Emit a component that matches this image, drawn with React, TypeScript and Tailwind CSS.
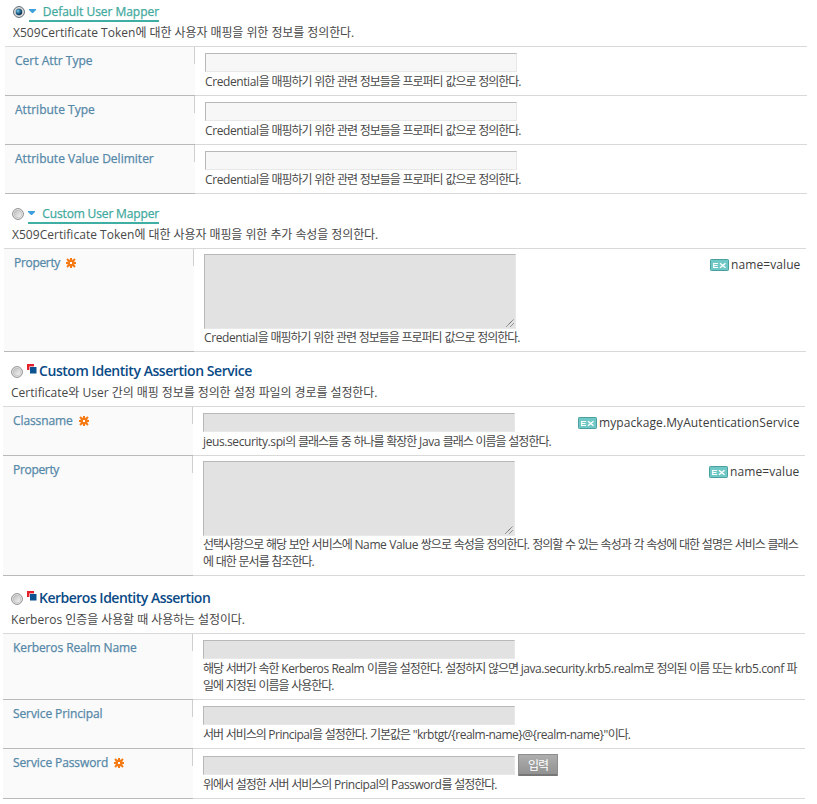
import type { ReactNode } from "react";

const LATIN = "font-['Open_Sans','Noto_Sans_CJK_KR',sans-serif]";
const HANGUL = "font-['Noto_Sans_CJK_KR',sans-serif]";

/** Sets Korean and Latin runs with their own letter spacing. */
function Mixed({ text, korean, latin }: { text: string; korean: string; latin: string }) {
  const runs = text.match(/[\uac00-\ud7a3]+|[^\uac00-\ud7a3]+/g) ?? [];
  return (
    <>
      {runs.map((run, i) =>
        /[\uac00-\ud7a3]/.test(run) ? (
          <span key={i} className={`${HANGUL} ${korean}`}>{run}</span>
        ) : (
          <span key={i} className={latin}>{run}</span>
        ),
      )}
    </>
  );
}

function Radio({ checked = false }: { checked?: boolean }) {
  return (
    <svg width="12" height="12" viewBox="0 0 12 12" className="shrink-0">
      <defs>
        <linearGradient id="radioFace" x1="0" y1="0" x2="1" y2="1">
          <stop offset="0" stopColor="#bcbcbc" />
          <stop offset="1" stopColor="#f8f8f8" />
        </linearGradient>
        <radialGradient id="radioDot" cx="0.35" cy="0.35" r="0.7">
          <stop offset="0" stopColor="#7fd0ee" />
          <stop offset="0.5" stopColor="#246a94" />
          <stop offset="1" stopColor="#0b2a48" />
        </radialGradient>
      </defs>
      <circle cx="6" cy="6" r="5.4" fill="#f4f4f4" stroke={checked ? "#52616e" : "#8b8b8b"} strokeWidth="1" />
      <circle cx="6" cy="6" r="3.9" fill="url(#radioFace)" stroke="#b4b4b4" strokeWidth="0.6" />
      {checked && <circle cx="6" cy="6" r="3.2" fill="url(#radioDot)" />}
    </svg>
  );
}

function Required() {
  return (
    <svg width="10" height="10" viewBox="0 0 10 10" className="shrink-0">
      <path
        d="M5 0v10M0 5h10M1 1l8 8M9 1L1 9"
        stroke="#f47b16"
        strokeWidth="2"
      />
      <circle cx="5" cy="5" r="3.6" fill="#f47b16" />
      <rect x="4" y="4" width="2" height="2" fill="#fff" />
    </svg>
  );
}

function Example({ text, width }: { text: string; width: string }) {
  return (
    <div className="ml-auto mr-[5px] mt-[7px] flex h-[18px] items-center gap-[2px]">
      <svg width="19" height="12" viewBox="0 0 19 12">
        <rect x="0.5" y="0.5" width="18" height="11" rx="0.8" fill="#6fc8c6" stroke="#4aa09f" />
        <path d="M3 4.5h5M3 6.5h4.5M3 8.5h5M3.7 4v5" stroke="#fff" strokeWidth="1" fill="none" />
        <path d="M10 4.2l5.5 4.6M15.5 4.2L10 8.8" stroke="#fff" strokeWidth="1.4" fill="none" />
      </svg>
      <span className={`${width} whitespace-nowrap text-[12px] leading-[18px] tracking-[0.09px] text-[#3c3c3c]`}>{text}</span>
    </div>
  );
}

function MapperTitle({ text, checked, width, tracking }: { text: string; checked?: boolean; width: string; tracking: string }) {
  return (
    <div className="flex h-[18px] items-start">
      <div className="mt-[2px]"><Radio checked={checked} /></div>
      <div className={`ml-[4px] flex h-[18px] border-b-2 border-[#3fafa3] ${width}`}>
        <svg width="7" height="4" viewBox="0 0 7 4" className="mt-[5px]">
          <path d="M0 0h7v1L4 4H3L0 1z" fill="#3e9fdc" />
        </svg>
        <span className={`ml-auto whitespace-nowrap text-[12px] leading-[15px] text-[#3fa99e] [-webkit-text-stroke:0.25px] ${tracking}`}>{text}</span>
      </div>
    </div>
  );
}

function ServiceTitle({ text, tracking }: { text: string; tracking: string }) {
  return (
    <div className="flex h-[18px] items-start">
      <div className="mt-[4px]"><Radio /></div>
      <svg width="10" height="10" viewBox="0 0 10 10" className="ml-[4px] mt-[2px]">
        <rect width="7" height="6" fill="#e3202c" />
        <rect x="2.4" y="2.4" width="7" height="7" fill="#fff" />
        <rect x="3" y="3" width="6.5" height="6.5" fill="#0d5291" />
      </svg>
      <span className={`ml-[2px] whitespace-nowrap text-[14px] font-semibold leading-[17px] text-[#0a4a86] ${tracking}`}>{text}</span>
    </div>
  );
}

function Row({ label, required, height, children, example, tracking = "tracking-[-0.1px]" }: {
  label: string; required?: boolean; height: string; children: ReactNode; example?: ReactNode; tracking?: string;
}) {
  return (
    <div className={`flex ${height}`}>
      <div className="flex w-[190px] shrink-0 border-b border-[#b9b9b9] bg-[#fafafa]">
        <div className="mt-[5px] flex h-[18px] grow items-center gap-[6px] pl-[10px]">
          <span className={`whitespace-nowrap text-[12px] text-[#5588a8] [-webkit-text-stroke:0.25px] ${tracking}`}>{label}</span>
          {required && <Required />}
        </div>
        <div className="h-[17px] w-px bg-[#cfcfcf]" />
      </div>
      <div className="flex grow border-b border-[#d9d9d9]">
        <div className="pl-[10px]">{children}</div>
        {example}
      </div>
    </div>
  );
}

function Input({ enabled = false, margin = "mt-[6px]" }: { enabled?: boolean; margin?: string }) {
  return (
    <div className={`${margin} h-[19px] w-[312px] border border-b-[#e8e8e8] border-l-[#b8b8b8] border-r-[#e8e8e8] border-t-[#b8b8b8] ${enabled ? "bg-[#f7f7f7]" : "bg-[#e2e2e2]"}`} />
  );
}

function Area() {
  return (
    <div className="mt-[5px] flex h-[75px] w-[312px] items-end justify-end border border-b-[#e8e8e8] border-l-[#b8b8b8] border-r-[#e8e8e8] border-t-[#b8b8b8] bg-[#e2e2e2]">
      <svg width="9" height="9" viewBox="0 0 9 9">
        <path d="M0.5 7.5l7-7M4.5 7.5l3-3" stroke="#555" strokeWidth="1" strokeDasharray="1.2 0.5" />
      </svg>
    </div>
  );
}

function Desc({ lines, korean = "tracking-[-1.02px]", latin = "tracking-[-0.4px]", className = "" }: {
  lines: string[]; korean?: string; latin?: string; className?: string;
}) {
  return (
    <div className={`w-0 text-[12px] leading-[17px] text-[#484848] ${className}`}>
      {lines.map((l) => (
        <div key={l} className="h-[17px] whitespace-nowrap">
          <Mixed text={l} korean={korean} latin={latin} />
        </div>
      ))}
    </div>
  );
}

/** One-line summary under a section title, set looser than the field notes. */
function Summary({ text, className }: { text: string; className: string }) {
  return <Desc lines={[text]} korean="tracking-[-0.12px]" latin="tracking-[0.03px]" className={className} />;
}

const CREDENTIAL = "Credential을 매핑하기 위한 관련 정보들을 프로퍼티 값으로 정의한다.";

export default function App() {
  return (
    <div className={`${LATIN} h-[804px] w-[817px] overflow-hidden bg-white`}>
      <section className="ml-[5px] w-[802px]">
        <header className="h-[46px] pl-[8px] pt-[4px]">
          <MapperTitle text="Default User Mapper" checked width="w-[130px]" tracking="tracking-[-0.04px]" />
          <Summary className="mt-px" text="X509Certificate Token에 대한 사용자 매핑을 위한 정보를 정의한다." />
        </header>
        <div className="border-t border-[#d9d9d9]">
          {["Cert Attr Type", "Attribute Type", "Attribute Value Delimiter"].map((label) => (
            <Row key={label} label={label} height="h-[49px]" tracking="tracking-[0.01px]">
              <Input enabled />
              <Desc lines={[CREDENTIAL]} />
            </Row>
          ))}
        </div>
      </section>

      <section className="ml-[4px] w-[802px]">
        <header className="h-[54px] pl-[8px] pt-[12px]">
          <MapperTitle text="Custom User Mapper" width="w-[131px]" tracking="tracking-[-0.15px]" />
          <Summary className="mt-px" text="X509Certificate Token에 대한 사용자 매핑을 위한 추가 속성을 정의한다." />
        </header>
        <div className="border-t border-[#d9d9d9]">
          <Row label="Property" required height="h-[103px]" tracking="tracking-[-0.32px]" example={<Example text="name=value" width="w-[70px]" />}>
            <Area />
            <Desc className="-mt-px" lines={[CREDENTIAL]} />
          </Row>
        </div>
      </section>

      <section className="ml-[3px] w-[802px]">
        <header className="h-[54px] pl-[8px] pt-[10px]">
          <ServiceTitle text="Custom Identity Assertion Service" tracking="tracking-[-0.44px]" />
          <Summary className="mt-[3px]" text="Certificate와 User 간의 매핑 정보를 정의한 설정 파일의 경로를 설정한다." />
        </header>
        <div className="border-t border-[#d9d9d9]">
          <Row label="Classname" required height="h-[49px]" example={<Example text="mypackage.MyAutenticationService" width="w-[201px]" />}>
            <Input />
            <Desc lines={["jeus.security.spi의 클래스들 중 하나를 확장한 Java 클래스 이름을 설정한다."]} />
          </Row>
          <Row label="Property" height="h-[120px]" tracking="tracking-[-0.32px]" example={<Example text="name=value" width="w-[70px]" />}>
            <Area />
            <Desc
              className="-mt-px"
              korean="tracking-[-1px]"
              lines={[
                "선택사항으로 해당 보안 서비스에 Name Value 쌍으로 속성을 정의한다. 정의할 수 있는 속성과 각 속성에 대한 설명은 서비스 클래스",
                "에 대한 문서를 참조한다.",
              ]}
            />
          </Row>
        </div>
      </section>

      <section className="ml-[3px] w-[802px]">
        <header className="h-[57px] pl-[8px] pt-[13px]">
          <ServiceTitle text="Kerberos Identity Assertion" tracking="tracking-[-0.5px]" />
          <Summary className="mt-[3px]" text="Kerberos 인증을 사용할 때 사용하는 설정이다." />
        </header>
        <div className="border-t border-[#d9d9d9]">
          <Row label="Kerberos Realm Name" height="h-[66px]">
            <Input />
            <Desc
              latin="tracking-[-0.43px]"
              lines={[
                "해당 서버가 속한 Kerberos Realm 이름을 설정한다. 설정하지 않으면 java.security.krb5.realm로 정의된 이름 또는 krb5.conf 파",
                "일에 지정된 이름을 사용한다.",
              ]}
            />
          </Row>
          <Row label="Service Principal" height="h-[49px]">
            <Input />
            <Desc latin="tracking-[-0.52px]" lines={['서버 서비스의 Principal을 설정한다. 기본값은 "krbtgt/{realm-name}@{realm-name}"이다.']} />
          </Row>
          <Row label="Service Password" required height="h-[50px]">
            <div className="flex h-[26px]">
              <Input margin="mt-[7px]" />
              <button className={`${HANGUL} ml-[3px] mt-[5px] h-[22px] w-[40px] shrink-0 whitespace-nowrap rounded-[1px] border border-b-2 border-[#8d8d8d] border-b-[#777] bg-linear-to-b from-[#aeaeae] to-[#929292] text-[12px] leading-[17px] tracking-[-1px] text-white`}>
                입력
              </button>
            </div>
            <Desc latin="tracking-[-0.45px]" lines={["위에서 설정한 서버 서비스의 Principal의 Password를 설정한다."]} />
          </Row>
        </div>
      </section>
    </div>
  );
}
